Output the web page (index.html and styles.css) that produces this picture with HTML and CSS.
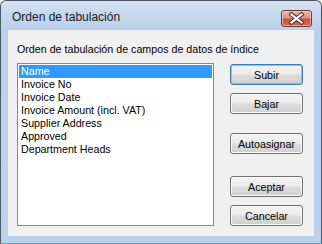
FILE: index.html
```html
<!DOCTYPE html>
<html lang="es">
<head>
<meta charset="utf-8">
<title>Orden de tabulación</title>
<link rel="stylesheet" href="styles.css">
</head>
<body>
<div class="window">
  <div class="titlebar">
    <span class="title">Orden de tabulación</span>
    <button class="close" type="button" aria-label="Cerrar">
      <svg width="31" height="17" viewBox="0 0 31 17">
        <path d="M10.5 4.5 L20.5 12.5 M20.5 4.5 L10.5 12.5" stroke="#4b3a38" stroke-width="4.2" stroke-linecap="square" fill="none"/>
        <path d="M10.5 4.5 L20.5 12.5 M20.5 4.5 L10.5 12.5" stroke="#ffffff" stroke-width="2.2" stroke-linecap="square" fill="none"/>
      </svg>
    </button>
  </div>
  <div class="client">
    <div class="label">Orden de tabulación de campos de datos de índice</div>
    <div class="content">
      <ul class="list">
        <li class="item selected">Name</li>
        <li class="item">Invoice No</li>
        <li class="item">Invoice Date</li>
        <li class="item">Invoice Amount (incl. VAT)</li>
        <li class="item">Supplier Address</li>
        <li class="item">Approved</li>
        <li class="item">Department Heads</li>
      </ul>
      <div class="buttons">
        <button class="btn default" type="button">Subir</button>
        <button class="btn gap-s" type="button">Bajar</button>
        <button class="btn gap-m" type="button">Autoasignar</button>
        <button class="btn gap-l" type="button">Aceptar</button>
        <button class="btn gap-s" type="button">Cancelar</button>
      </div>
    </div>
  </div>
</div>
</body>
</html>
```
FILE: styles.css
```css
html, body {
  margin: 0;
  padding: 0;
  background: #ffffff;
}

body {
  font-family: "Liberation Sans", Arial, sans-serif;
  color: #000000;
}

.window {
  width: 322px;
  height: 244px;
  box-sizing: border-box;
  border: 1px solid #4c5866;
  border-bottom-color: #37b4cf;
  border-radius: 6px 6px 0 0;
  background: linear-gradient(#d6e4f4 0px, #c4d7ee 14px, #bad0ea 29px, #bcd2ec 100%);
  padding: 0 7px 7px 7px;
  display: flex;
  flex-direction: column;
}

.titlebar {
  height: 29px;
  display: flex;
  align-items: flex-start;
  justify-content: space-between;
  flex: none;
}

.title {
  margin-top: 9px;
  padding-left: 4px;
  font-size: 12px;
  line-height: 15px;
  color: #1a1a1a;
}

.close {
  margin: 9px 2px 0 0;
  padding: 0;
  width: 31px;
  height: 17px;
  box-sizing: border-box;
  border: 1px solid #7e3429;
  border-radius: 3px;
  background: linear-gradient(#ebb4a6 0%, #df9482 45%, #c8533f 55%, #cf6a58 100%);
  box-shadow: inset 0 0 0 1px rgba(255, 220, 210, 0.55);
  display: flex;
  align-items: center;
  justify-content: center;
  overflow: hidden;
}

.close svg {
  display: block;
  margin: -1px;
}

.client {
  flex: 1;
  background: #f0f0f0;
  padding: 13px 11px 0 9px;
  font-size: 10.7px;
}

.label {
  line-height: 13px;
  height: 13px;
  white-space: nowrap;
}

.content {
  margin-top: 7px;
  display: flex;
  gap: 16px;
}

.list {
  margin: 0;
  padding: 1px;
  list-style: none;
  width: 197px;
  height: 163px;
  box-sizing: border-box;
  border: 1px solid #828790;
  background: #ffffff;
}

.item {
  height: 13px;
  line-height: 13px;
  padding-left: 2px;
  white-space: nowrap;
}

.item.selected {
  background: #3399ff;
  color: #ffffff;
}

.buttons {
  margin-top: 1px;
  display: flex;
  flex-direction: column;
}

.btn {
  width: 73px;
  height: 21px;
  box-sizing: border-box;
  margin: 0;
  padding: 1px 0 0 0;
  border: 1px solid #707070;
  border-radius: 3px;
  background: linear-gradient(#f2f2f2 0%, #ebebeb 48%, #dddddd 52%, #cfcfcf 100%);
  box-shadow: inset 0 0 0 1px #fbfbfb;
  font-family: "Liberation Sans", Arial, sans-serif;
  font-size: 10.7px;
  line-height: 18px;
  color: #000000;
  text-align: center;
}

.btn.default {
  border-color: #3c7fb1;
  box-shadow: inset 0 0 0 1px #5fd2f6;
}

.gap-s { margin-top: 8px; }
.gap-m { margin-top: 19px; }
.gap-l { margin-top: 22px; }
```
